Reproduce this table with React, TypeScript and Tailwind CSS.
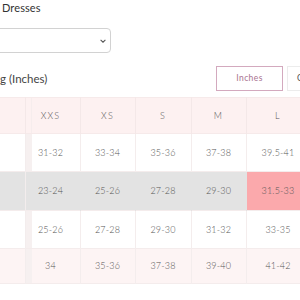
const rows = [
  { label: 'Bust', values: ['31-32', '33-34', '35-36', '37-38', '39.5-41', '42-44'], bg: 'bg-white' },
  { label: 'Waist', values: ['23-24', '25-26', '27-28', '29-30', '31.5-33', '34-36'], bg: 'bg-[#e3e3e3]', hl: 4 },
  { label: 'Hips', values: ['25-26', '27-28', '29-30', '31-32', '33-35', '36-38'], bg: 'bg-white' },
  { label: 'Hem', values: ['34', '35-36', '37-38', '39-40', '41-42', '43-44'], bg: 'bg-[#fdf4f4]' },
];

const sizes = ['XXS', 'XS', 'S', 'M', 'L', 'XL'];
const widths = ['w-[55px]', 'w-[55px]', 'w-[56px]', 'w-[55px]', 'w-[64px]', 'w-[64px]'];

function Chevron() {
  return (
    <svg className="w-[8px] h-[8px]" viewBox="0 0 10 10" fill="none" stroke="#555" strokeWidth="1.3">
      <path d="M2 3.5l3 3 3-3" />
    </svg>
  );
}

export default function App() {
  return (
    <div className="w-[300px] h-[300px] overflow-hidden bg-white text-[#333]" style={{ fontFamily: 'Lato, "Open Sans", sans-serif' }}>
      <h2 className="text-[11px] leading-[16px] pl-[2px] text-[#333] tracking-[0.1px]">Dresses</h2>

      <div className="mt-[12px] -ml-[10px] w-[121px] h-[25px] border border-[#d2d2d2] rounded-[4px] flex items-center justify-end pr-[3px]">
        <Chevron />
      </div>

      <div className="mt-[13px] h-[25px] flex items-center w-[400px]">
        <span className="text-[11.5px] text-[#444] w-[216px] shrink-0">g (Inches)</span>
        <button className="w-[67px] h-[25px] border border-[#d3a9be] text-[8.5px] tracking-[0.4px] text-[#a97390] shrink-0">
          Inches
        </button>
        <button className="ml-[4px] w-[90px] h-[25px] border border-[#ececec] text-[8.5px] text-[#555] text-left pl-[9px] shrink-0">
          Centimeters
        </button>
      </div>

      <table className="mt-[6px] table-fixed border-collapse text-[9px] font-light text-[#555] tracking-[0.2px] w-[374px]">
        <thead>
          <tr className="h-[36px] bg-[#fdf1f1] border-y border-[#f6eaea]">
            <th className="w-[25px] border-r border-[#f4e8e8] font-light"></th>
            {sizes.map((s, i) => (
              <th key={s} className={`${widths[i]} font-light tracking-[1.2px] border-r border-[#f4e8e8] ${i === 0 ? 'pr-[4px] shadow-[inset_5px_0_0_#fdf1f1,inset_6px_0_0_#f6eded]' : ''}`}>
                {s}
              </th>
            ))}
          </tr>
        </thead>
        <tbody>
          {rows.map((r, ri) => (
            <tr key={r.label} className={`${ri === 3 ? 'h-[35px]' : ri === 1 ? 'h-[39px]' : 'h-[38px]'} ${r.bg} border-b border-[#f4ecec]`}>
              <td className="border-r border-[#f3eded] text-transparent overflow-hidden">{r.label}</td>
              {r.values.map((v, i) => (
                <td
                  key={i}
                  className={`text-center border-r ${ri === 1 ? 'border-[#e3e3e3]' : 'border-[#f4eded]'} ${r.hl === i ? 'bg-[#fba9ac]' : ''} ${i === 0 && ri !== 1 ? 'pr-[4px] shadow-[inset_5px_0_0_transparent,inset_6px_0_0_#f6f0f0]' : i === 0 ? 'pr-[4px]' : ''}`}
                >
                  {v}
                </td>
              ))}
            </tr>
          ))}
        </tbody>
      </table>
    </div>
  );
}
